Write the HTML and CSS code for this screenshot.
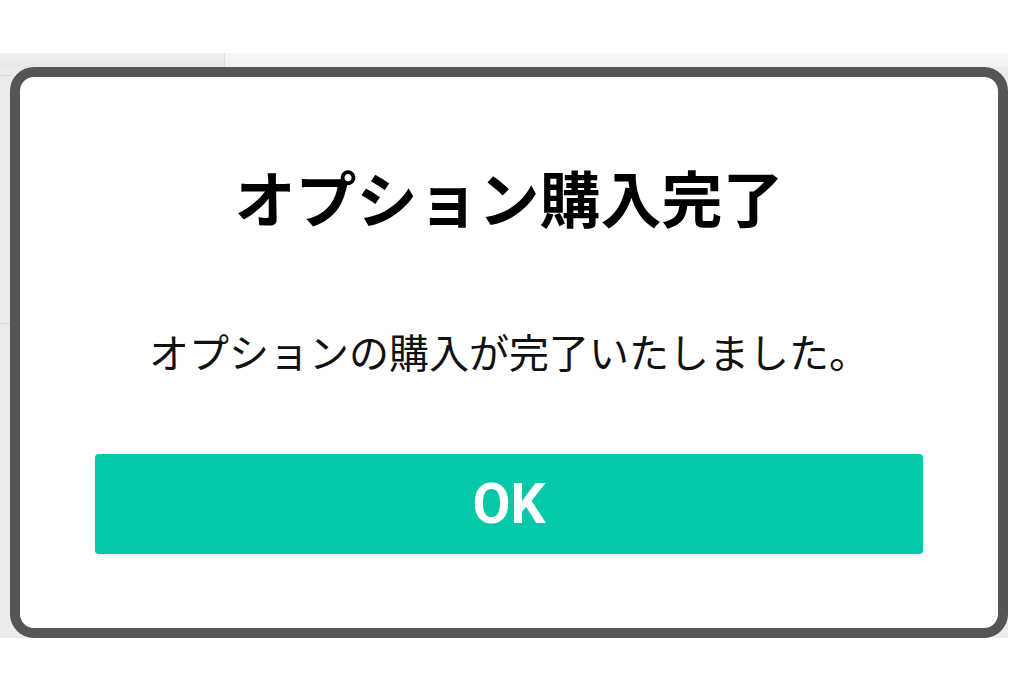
FILE: index.html
```html
<!DOCTYPE html>
<html lang="ja">
<head>
<meta charset="utf-8">
<title>オプション購入完了</title>
<link rel="stylesheet" href="styles.css">
</head>
<body>
<div class="backdrop">
  <div class="bg-tabs">
    <div class="bg-tab bg-tab-left"></div>
    <div class="bg-tab bg-tab-right"></div>
  </div>
  <div class="bg-line bg-line-1"></div>
  <div class="bg-line bg-line-2"></div>
  <div class="dialog">
    <h1 class="dialog-title">オプション購入完了</h1>
    <p class="dialog-message">オプションの購入が完了いたしました。</p>
    <button class="dialog-button" type="button">OK</button>
  </div>
</div>
</body>
</html>
```
FILE: styles.css
```css
html, body {
  margin: 0;
  padding: 0;
  background: #ffffff;
}

body {
  width: 1024px;
  height: 683px;
  overflow: hidden;
  font-family: "Noto Sans CJK JP", "Noto Sans", sans-serif;
}

.backdrop {
  position: relative;
  margin-top: 53px;
  width: 1008px;
  height: 585px;
  background: #ebebeb;
}

.bg-tabs {
  display: flex;
  height: 14px;
}

.bg-tab {
  height: 14px;
}

.bg-tab-left {
  width: 224px;
  background: linear-gradient(#f1f1f1, #e7e7e7);
  border-right: 1px solid #dcdcdc;
}

.bg-tab-right {
  flex: 1;
  background: linear-gradient(#f8f8f8, #f0f0f0);
}

.bg-line {
  position: absolute;
  left: 0;
  width: 12px;
  height: 1px;
  background: #d6d6d6;
}

.bg-line-1 { top: 22px; }
.bg-line-2 { top: 270px; }

.dialog {
  position: absolute;
  left: 10px;
  top: 14px;
  width: 998px;
  height: 571px;
  box-sizing: border-box;
  border: 10px solid #555555;
  border-radius: 24px;
  background: #ffffff;
  display: flex;
  flex-direction: column;
  align-items: center;
}

.dialog-title {
  margin: 80px 0 0;
  font-size: 61px;
  line-height: 80px;
  font-weight: 700;
  color: #000000;
  letter-spacing: 0;
}

.dialog-message {
  margin: 90px 0 0;
  font-size: 40px;
  line-height: 48px;
  font-weight: 400;
  color: #111111;
}

.dialog-button {
  margin: 79px 0 0;
  width: 828px;
  height: 100px;
  border: none;
  border-radius: 4px;
  background: #04c8a8;
  color: #ffffff;
  font-family: Roboto, "Noto Sans", sans-serif;
  font-size: 55px;
  font-weight: 700;
  padding: 0;
  box-shadow: 0 1px 2px rgba(0, 0, 0, 0.12);
}
```
